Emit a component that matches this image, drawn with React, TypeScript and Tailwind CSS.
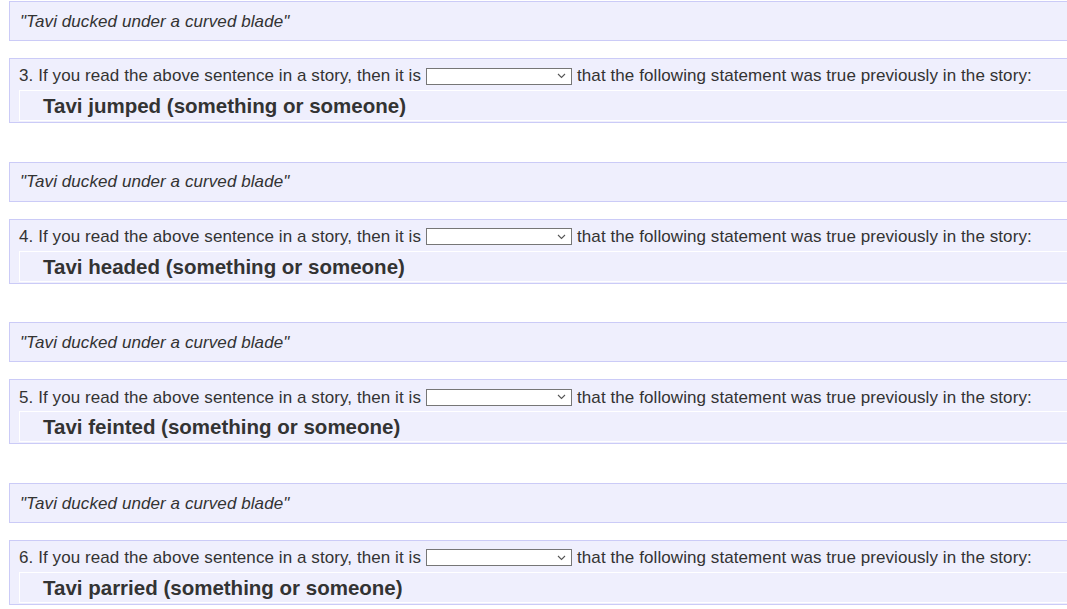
const items = [
  { num: 3, verb: "jumped" },
  { num: 4, verb: "headed" },
  { num: 5, verb: "feinted" },
  { num: 6, verb: "parried" },
];

const QUOTE = "\"Tavi ducked under a curved blade\"";

const Select = () => (
  <span className="inline-flex items-center justify-end w-[146px] h-[17px] border border-[#767676] bg-white mx-[5px] pr-[5px]">
    <svg width="9" height="6" viewBox="0 0 9 6" fill="none">
      <path d="M1 1l3.5 3.5L8 1" stroke="#555" strokeWidth="1.1" />
    </svg>
  </span>
);

const QuoteBox = () => (
  <div className="h-[40px] flex items-center pl-[10px] pt-[1px] border border-r-0 border-[#cbcbf7] bg-[#efeffd] italic text-[17px] tracking-[0.08px] text-[#333]">
    {QUOTE}
  </div>
);

const QuestionBox = ({ num, verb }: { num: number; verb: string }) => (
  <div className="border border-r-0 border-[#cbcbf7] bg-[#efeffd] text-[#333] pl-[9px] pt-[6px] pb-[1px]">
    <div className="flex items-center h-[22px] text-[17px] tracking-[0.08px] whitespace-nowrap">
      <span>{num}. If you read the above sentence in a story, then it is</span>
      <Select />
      <span>that the following statement was true previously in the story:</span>
    </div>
    <div className="mt-[3px] h-[31px] flex items-center pt-[2px] border border-r-0 border-white pl-[23px] text-[20.5px] font-bold whitespace-nowrap">
      Tavi {verb} (something or someone)
    </div>
  </div>
);

export default function App() {
  return (
    <div
      className="w-[1067px] h-[609px] overflow-hidden bg-white"
      style={{ fontFamily: '"Liberation Sans", Arial, sans-serif' }}
    >
      <div className="ml-[9px] w-[1100px] pt-[1px] flex flex-col">
        {items.map((it) => (
          <div key={it.num} className="flex flex-col mb-[38.66px]">
            <QuoteBox />
            <div className="h-[17px]" />
            <QuestionBox num={it.num} verb={it.verb} />
          </div>
        ))}
      </div>
    </div>
  );
}
